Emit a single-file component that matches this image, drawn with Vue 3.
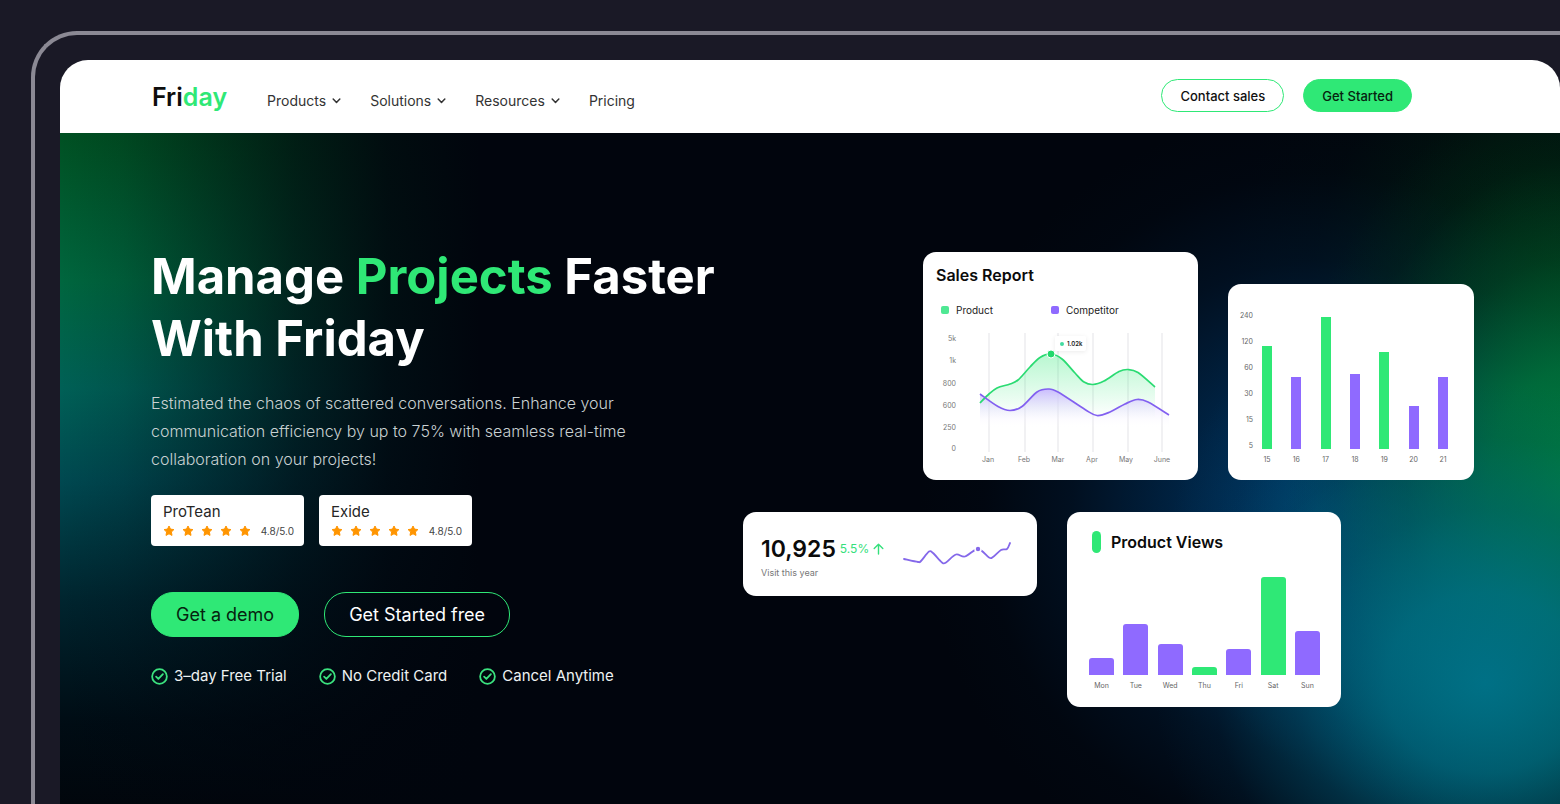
<script setup>
const menus = ['Products', 'Solutions', 'Resources']
const reviews = [
  { name: 'ProTean', score: '4.8/5.0' },
  { name: 'Exide', score: '4.8/5.0' },
]
const perks = ['3–day Free Trial', 'No Credit Card', 'Cancel Anytime']

const scale = [240, 120, 60, 30, 15, 5]
const daily = [
  { day: 15, value: 103, green: true },
  { day: 16, value: 72 },
  { day: 17, value: 132, green: true },
  { day: 18, value: 75 },
  { day: 19, value: 97, green: true },
  { day: 20, value: 43 },
  { day: 21, value: 72 },
]
const weekly = [
  { day: 'Mon', value: 17 },
  { day: 'Tue', value: 51 },
  { day: 'Wed', value: 31 },
  { day: 'Thu', value: 8, green: true },
  { day: 'Fri', value: 26 },
  { day: 'Sat', value: 98, green: true },
  { day: 'Sun', value: 44 },
]

const months = [
  { name: 'Jan', x: 65 }, { name: 'Feb', x: 101 }, { name: 'Mar', x: 135 },
  { name: 'Apr', x: 169 }, { name: 'May', x: 203 }, { name: 'June', x: 239 },
]
const gridX = [66, 102, 135, 170, 205, 239]
const levels = [
  { name: '5k', y: 13 }, { name: '1k', y: 35 }, { name: '800', y: 58 },
  { name: '600', y: 80 }, { name: '250', y: 102 }, { name: '0', y: 123 },
]

// Catmull-Rom spline through the points, written as cubic segments
function smooth(p) {
  let d = `M${p[0][0]} ${p[0][1]}`
  for (let i = 0; i < p.length - 1; i++) {
    const a = p[i - 1] || p[i]
    const b = p[i]
    const c = p[i + 1]
    const e = p[i + 2] || c
    d += `C${b[0] + (c[0] - a[0]) / 6} ${b[1] + (c[1] - a[1]) / 6} ${c[0] - (e[0] - b[0]) / 6} ${c[1] - (e[1] - b[1]) / 6} ${c[0]} ${c[1]}`
  }
  return d
}
const product = smooth([[57, 75], [65, 67], [74, 60], [87, 56], [95, 52], [107, 39], [117, 29.5], [128, 26], [139, 31], [152, 45], [161, 54], [170, 56.5], [181, 53], [196, 43.5], [205, 41.5], [215, 44.5], [232, 59]])
const competitor = smooth([[57, 66], [75, 78.5], [87, 82.5], [99, 78.5], [114, 64], [125, 61], [135, 64], [162, 81.5], [174, 87.5], [187, 84], [202, 76], [214, 71.5], [225, 74], [246, 87]])
const productArea = product + 'V90H57Z'
const competitorArea = competitor + 'V100H57Z'
const trend = smooth([[1, 20], [15, 23], [18, 22], [26, 12.5], [30, 14], [39, 23.5], [43, 23.5], [53, 15.5], [62, 17.5], [75, 10], [86, 18.5], [90, 18], [98, 11], [104, 10], [107, 4]])
</script>

<template>
  <div class="stage">
    <div class="bezel">
      <div class="window">
        <header class="topbar">
          <a class="logo" href="#">Fri<span>day</span></a>
          <nav class="nav">
            <button v-for="m in menus" :key="m" type="button" class="nav-item">
              {{ m }}
              <svg width="9" height="6" viewBox="0 0 9 6" fill="none" stroke="currentColor" stroke-width="1.5" stroke-linecap="round" stroke-linejoin="round" aria-hidden="true"><path d="M1.2 1l3.3 3.5L7.8 1" /></svg>
            </button>
            <a class="nav-item" href="#">Pricing</a>
          </nav>
          <div class="actions">
            <button type="button" class="pill small outline">Contact sales</button>
            <button type="button" class="pill small solid">Get Started</button>
          </div>
        </header>

        <main class="hero">
          <section class="copy">
            <h1>Manage <em>Projects</em> Faster<br>With Friday</h1>
            <p class="lead">
              Estimated the chaos of scattered conversations. Enhance your<br>
              communication efficiency by up to 75% with seamless real-time<br>
              collaboration on your projects!
            </p>
            <div class="reviews">
              <div v-for="r in reviews" :key="r.name" class="review">
                <div class="brand">{{ r.name }}</div>
                <div class="rating">
                  <span class="stars">
                    <svg v-for="n in 5" :key="n" width="12" height="12" viewBox="0 0 12 12" aria-hidden="true"><path d="M6 1l1.5 3.1 3.4.5-2.5 2.4.6 3.4L6 8.8l-3 1.6.6-3.4L1.1 4.6l3.4-.5z" fill="#ff9500" stroke="#ff9500" stroke-width="1" stroke-linejoin="round" /></svg>
                  </span>
                  <span class="score">{{ r.score }}</span>
                </div>
              </div>
            </div>
            <div class="cta">
              <button type="button" class="pill large solid">Get a demo</button>
              <button type="button" class="pill large ghost">Get Started free</button>
            </div>
            <ul class="perks">
              <li v-for="p in perks" :key="p">
                <svg width="17" height="17" viewBox="0 0 18 18" fill="none" stroke="#3be27f" stroke-width="1.9" stroke-linecap="round" stroke-linejoin="round" aria-hidden="true"><circle cx="9" cy="9" r="7.8" /><path d="M5.4 9.2l2.4 2.4 4.8-5.1" /></svg>
                {{ p }}
              </li>
            </ul>
          </section>

          <section class="board">
            <div class="row upper">
              <article class="card sales">
                <h2>Sales Report</h2>
                <div class="legend">
                  <span><i class="green"></i>Product</span>
                  <span><i></i>Competitor</span>
                </div>
                <svg class="lines" viewBox="0 0 275 141" role="img" aria-label="Sales by month">
                  <defs>
                    <linearGradient id="fillGreen" x1="0" y1="0" x2="0" y2="1">
                      <stop offset="0" stop-color="#2fe876" stop-opacity=".34" />
                      <stop offset="1" stop-color="#2fe876" stop-opacity="0" />
                    </linearGradient>
                    <linearGradient id="fillViolet" x1="0" y1="0" x2="0" y2="1">
                      <stop offset="0" stop-color="#c9b8ff" stop-opacity=".95" />
                      <stop offset="1" stop-color="#ffffff" stop-opacity="0" />
                    </linearGradient>
                  </defs>
                  <path v-for="x in gridX" :key="x" :d="`M${x} 5V124`" stroke="#f1f1f3" stroke-width="2" />
                  <path :d="productArea" fill="url(#fillGreen)" />
                  <path :d="competitorArea" fill="url(#fillViolet)" />
                  <path :d="product" fill="none" stroke="#2adb72" stroke-width="1.7" />
                  <path :d="competitor" fill="none" stroke="#8260f0" stroke-width="1.7" />
                  <rect x="132" y="8" width="31" height="15" rx="2" fill="#fff" class="tip" />
                  <circle cx="139" cy="16" r="2" fill="#43dba0" />
                  <text x="144" y="18" class="tip-text">1.02k</text>
                  <circle cx="128" cy="26" r="4" fill="#22d86b" stroke="#fff" stroke-width="1" />
                  <text v-for="l in levels" :key="l.name" x="33" :y="l.y" text-anchor="end" class="axis">{{ l.name }}</text>
                  <text v-for="m in months" :key="m.name" :x="m.x" y="134" text-anchor="middle" class="axis">{{ m.name }}</text>
                </svg>
              </article>

              <article class="card daily">
                <div class="scale"><span v-for="s in scale" :key="s">{{ s }}</span></div>
                <div class="bars thin">
                  <div v-for="b in daily" :key="b.day" class="col">
                    <i :class="{ green: b.green }" :style="{ height: b.value + 'px' }"></i>
                    <span>{{ b.day }}</span>
                  </div>
                </div>
              </article>
            </div>

            <div class="row lower">
              <article class="card visits">
                <div>
                  <div class="total"><strong>10,925</strong><span>5.5%</span>
                    <svg width="11" height="12" viewBox="0 0 11 12" fill="none" stroke="#35e07c" stroke-width="1.4" stroke-linecap="round" stroke-linejoin="round" aria-hidden="true"><path d="M5.5 11V1.4M1.2 5.4l4.3-4.2 4.3 4.2" /></svg>
                  </div>
                  <div class="note">Visit this year</div>
                </div>
                <svg class="trend" width="108" height="28" viewBox="0 0 108 28" fill="none" aria-hidden="true">
                  <path :d="trend" stroke="#8468ea" stroke-width="1.8" stroke-linecap="round" />
                  <circle cx="75" cy="10" r="3" fill="#8468ea" stroke="#fff" stroke-width="1.6" />
                </svg>
              </article>

              <article class="card views">
                <h2><i></i>Product Views</h2>
                <div class="bars wide">
                  <div v-for="b in weekly" :key="b.day" class="col">
                    <i :class="{ green: b.green }" :style="{ height: b.value + 'px' }"></i>
                    <span>{{ b.day }}</span>
                  </div>
                </div>
              </article>
            </div>
          </section>
        </main>
      </div>
    </div>
  </div>
</template>

<style>
body {
  margin: 0;
  background: #1a1926;
}
</style>

<style scoped>
* {
  box-sizing: border-box;
}

.stage {
  display: flex;
  min-height: 100vh;
  padding: 31px 0 0 31px;
  background: #1a1926;
  font-family: Inter, "Liberation Sans", sans-serif;
  overflow: hidden;
}

.bezel {
  display: flex;
  flex: 1;
  padding: 25px 0 0 25px;
  border: solid #8b8994;
  border-width: 4px 0 0 4px;
  border-top-left-radius: 46px;
}

.window {
  display: flex;
  flex: 1;
  flex-direction: column;
  border-radius: 28px 28px 0 0;
  overflow: hidden;
}

.topbar {
  display: flex;
  align-items: flex-start;
  height: 73px;
  padding: 0 148px 0 92px;
  background: #fff;
}

.logo {
  margin-top: 20px;
  color: #0d0d0d;
  font-size: 25px;
  font-weight: 600;
  line-height: 34px;
  text-decoration: none;
}

.logo span {
  color: #2fe876;
}

.nav {
  display: flex;
  gap: 29px;
  margin: 31px 0 0 40px;
}

.nav-item {
  display: flex;
  align-items: center;
  gap: 6px;
  padding: 0;
  border: 0;
  background: none;
  color: #333;
  font: 400 14px/20px Inter, "Liberation Sans", sans-serif;
  text-decoration: none;
}

.actions {
  display: flex;
  gap: 19px;
  margin: 19px 0 0 auto;
}

.pill {
  border: 1px solid #2fe876;
  border-radius: 22px;
  font-family: inherit;
  font-weight: 400;
  white-space: nowrap;
}

.small {
  height: 33px;
  padding: 0 18px;
  font-size: 13px;
  font-weight: 500;
}

.large {
  height: 45px;
  padding: 0 24px;
  font-size: 18px;
}

.solid {
  background: #2fe876;
  color: #06220f;
}

.outline {
  background: #fff;
  color: #111;
}

.ghost {
  background: transparent;
  color: #fff;
}

.hero {
  display: flex;
  flex: 1;
  align-items: flex-start;
  justify-content: space-between;
  padding: 113px 86px 90px 91px;
  background:
    radial-gradient(ellipse 330px 300px at 95% 82%, rgba(0, 116, 140, .92) 0, rgba(0, 112, 136, .76) 30%, rgba(0, 92, 120, .42) 58%, rgba(0, 60, 90, .13) 82%, rgba(0, 50, 80, 0) 100%),
    radial-gradient(ellipse 290px 400px at 101% 53%, rgba(0, 132, 66, .98) 0, rgba(0, 122, 60, .8) 30%, rgba(0, 92, 42, .46) 58%, rgba(0, 60, 26, .16) 82%, rgba(0, 40, 20, 0) 100%),
    radial-gradient(ellipse 270px 260px at 92% 62%, rgba(0, 98, 128, .85) 0, rgba(0, 90, 124, .6) 40%, rgba(0, 74, 112, .18) 76%, rgba(0, 60, 100, 0) 100%),
    radial-gradient(ellipse 400px 400px at 84% 56%, rgba(0, 58, 108, .92) 0, rgba(0, 50, 94, .7) 32%, rgba(0, 34, 66, .36) 62%, rgba(0, 20, 38, .12) 84%, rgba(0, 10, 24, 0) 100%),
    radial-gradient(ellipse 330px 330px at 100% 22%, rgba(0, 44, 18, .8) 0, rgba(0, 34, 16, .5) 45%, rgba(0, 16, 12, .2) 75%, rgba(0, 10, 10, 0) 100%),
    linear-gradient(90deg, rgba(1, 5, 13, 0) 0, rgba(1, 5, 13, .12) 15%, rgba(1, 5, 13, .38) 34%, rgba(1, 5, 13, .68) 56%, rgba(1, 5, 13, .9) 78%, #01050d 100%) 0 0 / 420px 100% no-repeat,
    linear-gradient(180deg, #005022 0, #00663e 22%, #006056 38%, #004850 52%, #00242e 70%, #000c14 88%, #01060c 100%) 0 0 / 419px 100% no-repeat,
    #01050d;
}

.copy {
  width: 0;
}

h1 {
  margin: 0;
  color: #fff;
  font-size: 49px;
  font-weight: 700;
  line-height: 62px;
  white-space: nowrap;
}

h1 em {
  color: #2fe876;
  font-style: normal;
}

.lead {
  margin: 19px 0 0;
  color: #c9d1d2;
  font-size: 16px;
  font-weight: 300;
  line-height: 28px;
  white-space: nowrap;
}

.reviews {
  display: flex;
  gap: 15px;
  margin-top: 22px;
}

.review {
  flex: none;
  width: 153px;
  padding: 7px 10px 6px 12px;
  border-radius: 4px;
  background: #fff;
}

.brand {
  color: #262626;
  font-size: 15px;
  line-height: 20px;
}

.rating {
  display: flex;
  align-items: center;
  justify-content: space-between;
  color: #444;
  font-size: 10px;
  line-height: 18px;
}

.stars {
  display: flex;
  gap: 7px;
}

.cta {
  display: flex;
  gap: 25px;
  margin-top: 46px;
}

.perks {
  display: flex;
  gap: 32px;
  margin: 28px 0 0;
  padding: 0;
  color: #eef2f2;
  font-size: 15px;
  line-height: 22px;
  list-style: none;
}

.perks li {
  display: flex;
  align-items: center;
  gap: 6px;
  white-space: nowrap;
}

.perks svg {
  flex: none;
}

.board {
  display: flex;
  flex-direction: column;
  gap: 32px;
  padding-top: 6px;
}

.row {
  display: flex;
  gap: 30px;
}

.upper {
  align-items: flex-end;
  justify-content: flex-end;
}

.lower {
  align-items: flex-start;
  padding-right: 133px;
}

.card {
  border-radius: 13px;
  background: #fff;
}

.card h2 {
  margin: 0;
  color: #0b0b0b;
  font-size: 16px;
  font-weight: 600;
  line-height: 24px;
}

.sales {
  width: 275px;
  padding: 11px 0 11px;
}

.sales h2 {
  padding-left: 13px;
}

.legend {
  display: grid;
  grid-template-columns: 110px 1fr;
  margin: 15px 0 10px;
  padding-left: 18px;
  color: #222;
  font-size: 10px;
  line-height: 16px;
}

.legend span {
  display: flex;
  align-items: center;
  gap: 7px;
}

.legend i {
  width: 8px;
  height: 8px;
  border-radius: 2px;
  background: #8f6aff;
}

.legend i.green {
  background: #4fe894;
}

.lines {
  display: block;
  width: 100%;
}

.axis {
  fill: #777;
  font-size: 7px;
}

.tip {
  filter: drop-shadow(0 1px 2px rgba(0, 0, 0, .08));
}

.tip-text {
  fill: #222;
  font-size: 6px;
  font-weight: 600;
}

.daily {
  display: flex;
  width: 246px;
  padding: 24px 17px 14px 10px;
}

.scale {
  display: flex;
  flex-direction: column;
  width: 15px;
  padding-bottom: 12px;
  color: #666;
  font-size: 7px;
  line-height: 16px;
  gap: 10px;
  text-align: right;
}

.bars {
  display: flex;
  flex: 1;
  align-items: flex-end;
  justify-content: space-between;
}

.col {
  display: flex;
  flex-direction: column;
  align-items: center;
  color: #666;
}

.col i {
  background: #8f6aff;
}

.col i.green {
  background: #2fe876;
}

.thin .col {
  width: 28px;
  font-size: 7px;
  line-height: 12px;
}

.thin i {
  width: 10px;
  margin-bottom: 5px;
}

.visits {
  display: flex;
  align-items: center;
  justify-content: space-between;
  width: 294px;
  padding: 22px 26px 15px 18px;
}

.total {
  display: flex;
  align-items: center;
  gap: 4px;
  color: #35e07c;
  font-size: 12px;
  line-height: 30px;
}

.total strong {
  color: #0b0b0b;
  font-size: 23px;
  font-weight: 600;
}

.note {
  margin-top: 1px;
  color: #777;
  font-size: 9px;
  line-height: 16px;
}

.trend {
  align-self: flex-start;
  margin-top: 5px;
}

.views {
  width: 274px;
  padding: 17px 21px 14px 22px;
}

.views h2 {
  display: flex;
  align-items: center;
  gap: 10px;
  padding-left: 3px;
  line-height: 26px;
}

.views h2 i {
  width: 9px;
  height: 22px;
  border-radius: 5px;
  background: #2fe876;
}

.wide {
  margin-top: 22px;
}

.wide .col {
  width: 25px;
  font-size: 7px;
  line-height: 14px;
}

.wide i {
  width: 100%;
  margin-bottom: 4px;
  border-radius: 3px 3px 0 0;
}
</style>
